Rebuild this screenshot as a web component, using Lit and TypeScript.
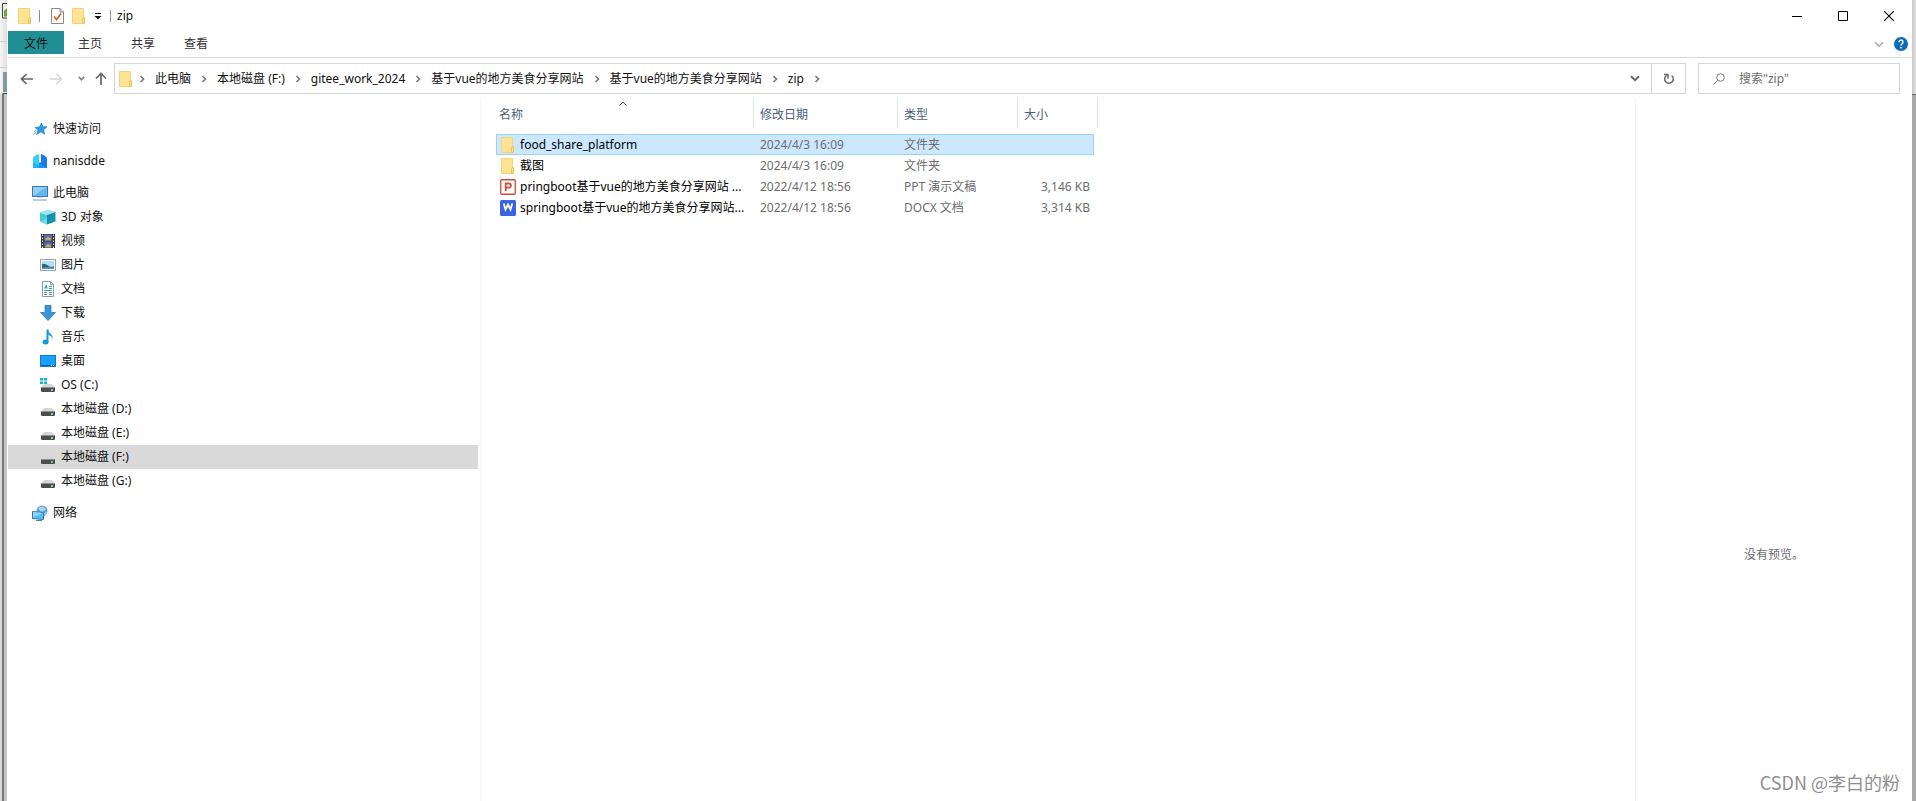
import { LitElement, html, css, svg } from "lit";
import { customElement, state } from "lit/decorators.js";
import { classMap } from "lit/directives/class-map.js";

const folderIcon = html`<svg width="14" height="16" viewBox="0 0 14 16" aria-hidden="true">
  <path d="M.5.5h11v15H.5z" fill="#ffe394" stroke="#f3d377" />
  <path d="M10.500 15.500v-5l1-1h1v6z" fill="#ffdf80" stroke="#ecc254" />
</svg>`;

const drive = svg`
  <path d="M4 7h8l3 4H1z" fill="#d4d6d7" />
  <rect x="1" y="10" width="14" height="5" rx="1" fill="#4b4f51" />
  <path d="M1.500 10.500h13" stroke="#8b8f91" />
  <circle cx="12" cy="13" r=".9" fill="#b9f0c8" />`;

const icons: Record<string, unknown> = {
  star: svg`<path d="M9.500 2l1.300 3.700 4.200.1-3.400 2.900 1 4.500-3.600-2.400-4.300 2.600 1.400-4.500L3 6.500l4.400-.6z" fill="#2f9be8" stroke="#1b7ac4" stroke-width=".7" /><path d="M2 10.500l2.500-1.500M1.500 13.500l3-2.500" stroke="#64b7ee" />`,
  cloud: svg`<path d="M1 4.500Q3 2 7 1v14H1z" fill="#35d0f6" /><path d="M1 9.500l6 3V15H1z" fill="#1aa6ee" opacity=".7" /><path d="M9 1q4 1 6 4v10H7V9.500h2z" fill="#1878e8" /><path d="M7 10l8 5H7z" fill="#1596f0" />`,
  pc: svg`<rect x=".5" y="1.500" width="15" height="10" fill="#5fb8ee" stroke="#3a7ca8" /><path d="M1 2h14L1 11z" fill="#8ed0f6" /><path d="M1 15h14" stroke="#7b9db4" /><path d="M5.500 12.500h5" stroke="#cfd8de" />`,
  cube: svg`<path d="M0 3.500L8 .5l7.500 2.500L7 6z" fill="#9be7f1" /><path d="M0 3.500L7 6v9.500l-7-3z" fill="#48c9da" /><path d="M7 6l8.500-3v9.500L7 15.500z" fill="#1390ab" /><path d="M7 9.500l-7 3 7 3z" fill="#7be0ea" opacity=".75" />`,
  video: svg`<rect x="1" y="1" width="14" height="14" fill="#35373a" /><rect x="4" y="1.500" width="8" height="6" fill="#566fb5" /><rect x="4" y="8.500" width="8" height="6" fill="#4b67ae" /><path d="M5 6.500l3-3 3 2v2H5zM5 13.500l3-3 3 2v2H5z" fill="#c9a84a" /><path d="M2.500 1.500v14M13.500 1.500v14" stroke="#e9e9e9" stroke-dasharray="1.500 1.500" />`,
  picture: svg`<rect x=".5" y="2.500" width="15" height="11" fill="#fff" stroke="#9aa3a9" /><rect x="2" y="4" width="12" height="8" fill="#b4def6" /><path d="M2 7q3-1 6 1.500t6 .5v3H2z" fill="#356277" /><path d="M2 10.500q6-1 12 0V12H2z" fill="#4d94bd" />`,
  document: svg`<path d="M2.500.5h8l3 3v12h-11z" fill="#fff" stroke="#8c9aa3" /><path d="M10.500.5v3h3" fill="none" stroke="#8c9aa3" /><path d="M9 5.500h3M9 7.500h3M4 9.500h8M4 11.500h3M4 13.500h3M9 11.500h3M9 13.500h3" stroke="#3f93c9" /><path d="M4 7.500l2.500-4.500 1 4.500z" fill="#3f93c9" />`,
  download: svg`<path d="M5 .5h6v7h4.500L8 15.500.5 7.500H5z" fill="#3b93d8" stroke="#2c79bb" stroke-width=".8" />`,
  music: svg`<path d="M8 1c.5 3 5.500 4.500 4.500 9-.5-2.500-2-3.500-4-4z" fill="#1596e0" /><path d="M7.500 .5v12.500" stroke="#1596e0" stroke-width="2" /><ellipse cx="5.500" cy="13" rx="3" ry="2.500" fill="#1596e0" />`,
  desktop: svg`<rect x=".5" y="2.500" width="15" height="11" fill="#16a0fa" stroke="#1079c8" /><path d="M1 12.500h14" stroke="#0c5f9f" /><path d="M11 12.500h1M13 12.500h1" stroke="#fff" />`,
  drive,
  system: svg`${drive}<path d="M0 1h3v2.500H0zM4 1h3v2.500H4zM0 4.500h3V7H0zM4 4.500h3V7H4z" fill="#12b4d4" />`,
  network: svg`<circle cx="10" cy="6" r="5.500" fill="#5ea4d4" /><path d="M6 3q5-3 8 1-3 4-6 2zM12 8l3-1-2 4z" fill="#a8d4ee" /><path d="M.5 6.500l11 1v7l-11-1z" fill="#54bdf4" stroke="#2c78a8" /><path d="M1 7l10 1-10 4z" fill="#8fd8fb" /><path d="M4 15.500h6" stroke="#5c7f94" />`,
};

const icon = (name: string) =>
  html`<svg width="16" height="16" viewBox="0 0 16 16" aria-hidden="true">${icons[name]}</svg>`;

const pptIcon = html`<svg width="16" height="16" viewBox="0 0 16 16" aria-hidden="true">
  <rect x=".75" y=".75" width="14.500" height="14.500" rx="1" fill="#fff" stroke="#cf4b38" stroke-width="1.300" />
  <path d="M5.700 12V4.500h3.100a2 2 0 0 1 0 4.200H5.700" fill="none" stroke="#cf4b38" stroke-width="1.800" />
</svg>`;

const docIcon = html`<svg width="16" height="16" viewBox="0 0 16 16" aria-hidden="true">
  <rect width="16" height="16" rx="1.500" fill="#3a63e4" />
  <path d="M3.700 3.500l1.800 6L8 4.500l2.500 5 1.800-6" fill="none" stroke="#fff" stroke-width="1.800" />
</svg>`;

const chevronRight = html`<svg width="6" height="8" viewBox="0 0 6 8" aria-hidden="true">
  <path d="M1.500 1l3 3-3 3" fill="none" stroke="#777" stroke-width="1.600" />
</svg>`;

const chevronDown = (w: number, color: string, weight = 1.6) => html`<svg width=${w} height="7" viewBox="0 0 10 7" aria-hidden="true">
  <path d="M1 1.200l4 4 4-4" fill="none" stroke=${color} stroke-width=${weight} />
</svg>`;

interface Place {
  label: string;
  icon: string;
  children?: Place[];
}

const places: Place[] = [
  { label: "快速访问", icon: "star" },
  { label: "nanisdde", icon: "cloud" },
  {
    label: "此电脑",
    icon: "pc",
    children: [
      { label: "3D 对象", icon: "cube" },
      { label: "视频", icon: "video" },
      { label: "图片", icon: "picture" },
      { label: "文档", icon: "document" },
      { label: "下载", icon: "download" },
      { label: "音乐", icon: "music" },
      { label: "桌面", icon: "desktop" },
      { label: "OS (C:)", icon: "system" },
      { label: "本地磁盘 (D:)", icon: "drive" },
      { label: "本地磁盘 (E:)", icon: "drive" },
      { label: "本地磁盘 (F:)", icon: "drive" },
      { label: "本地磁盘 (G:)", icon: "drive" },
    ],
  },
  { label: "网络", icon: "network" },
];

const crumbs = ["此电脑", "本地磁盘 (F:)", "gitee_work_2024", "基于vue的地方美食分享网站", "基于vue的地方美食分享网站", "zip"];

const files = [
  { name: "food_share_platform", date: "2024/4/3 16:09", type: "文件夹", size: "", icon: folderIcon },
  { name: "截图", date: "2024/4/3 16:09", type: "文件夹", size: "", icon: folderIcon },
  { name: "pringboot基于vue的地方美食分享网站 ...", date: "2022/4/12 18:56", type: "PPT 演示文稿", size: "3,146 KB", icon: pptIcon },
  { name: "springboot基于vue的地方美食分享网站...", date: "2022/4/12 18:56", type: "DOCX 文档", size: "3,314 KB", icon: docIcon },
];

const base = css`
  :host {
    display: block;
    box-sizing: border-box;
  }
  * {
    box-sizing: border-box;
  }
  svg {
    display: block;
    flex: none;
  }
  button {
    font: inherit;
    color: inherit;
    background: none;
    border: 0;
    margin: 0;
    padding: 0;
    display: flex;
    align-items: center;
    justify-content: center;
  }
  a {
    color: inherit;
    text-decoration: none;
  }
`;

@customElement("title-bar")
export class TitleBar extends LitElement {
  static styles = [
    base,
    css`
      .bar {
        display: flex;
        align-items: center;
        height: 31px;
        padding-left: 10px;
      }
      .quick {
        width: 14px;
        margin-right: 7px;
      }
      .line {
        width: 1px;
        height: 12px;
        background: #8c8c8c;
      }
      .tools {
        display: flex;
        align-items: center;
        gap: 8px;
        margin: 0 8px 0 11px;
      }
      .title {
        flex: 1;
        margin: 0 0 0 6px;
        font-size: 12px;
        font-weight: 400;
      }
      .control {
        width: 46px;
        height: 30px;
      }
    `,
  ];

  render() {
    return html`<header class="bar">
      <span class="quick">${folderIcon}</span>
      <span class="line"></span>
      <div class="tools">
        <button aria-label="属性">
          <svg width="13" height="16" viewBox="0 0 13 16">
            <path d="M.5.5h8.500l3.500 3.500v11.500H.5z" fill="#fff" stroke="#888" />
            <path d="M9 .5V4h3.500" fill="none" stroke="#888" />
            <path d="M3 8.500l2.500 3 4.500-6" fill="none" stroke="#d9652b" stroke-width="1.800" />
          </svg>
        </button>
        <button aria-label="新建文件夹">${folderIcon}</button>
        <button aria-label="自定义快速访问工具栏">
          <svg width="8" height="8" viewBox="0 0 8 8">
            <path d="M1 1.500h6" stroke="#111" />
            <path d="M.5 4h7L4 7.500z" fill="#111" />
          </svg>
        </button>
      </div>
      <span class="line"></span>
      <h1 class="title">zip</h1>
      <button class="control" aria-label="最小化">
        <svg width="10" height="10" viewBox="0 0 10 10"><path d="M0 5.500h10" stroke="#000" /></svg>
      </button>
      <button class="control" aria-label="最大化">
        <svg width="10" height="10" viewBox="0 0 10 10"><path d="M.5.5h9v9h-9z" fill="none" stroke="#000" /></svg>
      </button>
      <button class="control" aria-label="关闭">
        <svg width="10" height="10" viewBox="0 0 10 10"><path d="M0 0l10 10M10 0L0 10" stroke="#000" stroke-width="1.100" /></svg>
      </button>
    </header>`;
  }
}

@customElement("ribbon-tabs")
export class RibbonTabs extends LitElement {
  static styles = [
    base,
    css`
      .ribbon {
        display: flex;
        align-items: flex-start;
        height: 27px;
        border-bottom: 1px solid #d8dadb;
      }
      .tabs {
        display: flex;
        flex: 1;
      }
      .tab {
        height: 23px;
        padding: 2px 15px 0 14px;
        color: #333;
      }
      .file {
        padding: 2px 16px 0;
        background: #1f8f95;
        color: #111;
      }
      .side {
        display: flex;
        align-items: center;
        gap: 10px;
        height: 26px;
        padding-right: 4px;
      }
    `,
  ];

  render() {
    return html`<div class="ribbon">
      <nav class="tabs">
        <button class="tab file">文件</button>
        <button class="tab">主页</button>
        <button class="tab">共享</button>
        <button class="tab">查看</button>
      </nav>
      <div class="side">
        <button aria-label="展开功能区">${chevronDown(10, "#aaa")}</button>
        <button aria-label="帮助">
          <svg width="14" height="14" viewBox="0 0 14 14">
            <circle cx="7" cy="7" r="7" fill="#0a6cbd" />
            <path d="M5 5.200a2 2 0 1 1 3 1.600Q7 7.400 7 8.600" fill="none" stroke="#fff" stroke-width="1.400" />
            <circle cx="7" cy="10.700" r=".9" fill="#fff" />
          </svg>
        </button>
      </div>
    </div>`;
  }
}

@customElement("address-bar")
export class AddressBar extends LitElement {
  static styles = [
    base,
    css`
      .row {
        display: flex;
        padding: 5px 12px 4px 12px;
      }
      .history {
        display: flex;
        align-items: center;
        gap: 15px;
        width: 87px;
        margin-right: 7px;
      }
      .recent {
        display: flex;
        align-items: center;
        gap: 10px;
      }
      .address {
        display: flex;
        flex: 1;
        min-width: 0;
        height: 31px;
        border: 1px solid #d4d7d8;
        padding-left: 4px;
      }
      .crumbs {
        display: flex;
        align-items: center;
        flex: 1;
        min-width: 0;
        overflow: hidden;
        list-style: none;
        margin: 0;
        padding: 0;
        white-space: nowrap;
      }
      .crumb {
        display: flex;
        align-items: center;
      }
      .crumb svg {
        margin: 0 10px;
      }
      .folder {
        width: 10px;
        align-self: center;
      }
      .drop {
        width: 32px;
      }
      .refresh {
        width: 34px;
        border-left: 1px solid #d4d7d8;
      }
      .search {
        display: flex;
        align-items: center;
        gap: 14px;
        width: 202px;
        height: 31px;
        margin-left: 12px;
        padding-left: 14px;
        border: 1px solid #d4d7d8;
      }
      .box {
        flex: 1;
        min-width: 0;
        border: 0;
        padding: 0;
        outline: 0;
        font: inherit;
        background: none;
      }
      .box::placeholder {
        color: #6d6d6d;
        opacity: 1;
      }
    `,
  ];

  render() {
    return html`<div class="row">
      <div class="history">
        <button aria-label="后退">
          <svg width="14" height="12" viewBox="0 0 14 12"><path d="M13 6H2M6.500 1l-5 5 5 5" fill="none" stroke="#666" stroke-width="1.700" /></svg>
        </button>
        <button aria-label="前进">
          <svg width="14" height="12" viewBox="0 0 14 12"><path d="M1 6h11M7.500 1l5 5-5 5" fill="none" stroke="#d4d4d4" stroke-width="1.400" /></svg>
        </button>
        <div class="recent">
          <button aria-label="最近浏览的位置">${chevronDown(7, "#888", 2.4)}</button>
          <button aria-label="上移">
            <svg width="12" height="14" viewBox="0 0 12 14"><path d="M6 13V2M1 6.500l5-5 5 5" fill="none" stroke="#666" stroke-width="1.700" /></svg>
          </button>
        </div>
      </div>
      <div class="address">
        <span class="folder">${folderIcon}</span>
        <ol class="crumbs">
          <li class="crumb">${chevronRight}</li>
          ${crumbs.map((c) => html`<li class="crumb"><a href="#">${c}</a>${chevronRight}</li>`)}
        </ol>
        <button class="drop" aria-label="以前的位置">${chevronDown(10, "#666", 2)}</button>
        <button class="refresh" aria-label="刷新">
          <svg width="12" height="12" viewBox="0 0 12 12">
            <path d="M8.500 2.500a4.300 4.300 0 1 1-5 0" fill="none" stroke="#666" stroke-width="1.500" />
            <path d="M1 1.500h4v4" fill="none" stroke="#666" stroke-width="1.500" />
          </svg>
        </button>
      </div>
      <label class="search">
        <svg width="12" height="12" viewBox="0 0 12 12"><circle cx="7.500" cy="4.500" r="3.800" fill="none" stroke="#777" /><path d="M4.800 7.200L.5 11.500" stroke="#777" /></svg>
        <input class="box" type="search" aria-label="搜索" placeholder='搜索"zip"' />
      </label>
    </div>`;
  }
}

@customElement("place-tree")
export class PlaceTree extends LitElement {
  @state() private current = "本地磁盘 (F:)";

  static styles = [
    base,
    css`
      .tree,
      .branch {
        list-style: none;
        margin: 0;
        padding: 0;
      }
      .tree {
        display: flex;
        flex-direction: column;
        gap: 8px;
        padding-top: 19px;
      }
      .place {
        display: flex;
        align-items: center;
        gap: 5px;
        height: 24px;
        padding-left: 24px;
      }
      .branch .place {
        padding-left: 32px;
      }
      .current {
        background: #d9d9d9;
      }
    `,
  ];

  private link(p: Place) {
    return html`<a
      href="#"
      class=${classMap({ place: true, current: p.label === this.current })}
      @click=${() => (this.current = p.label)}
      >${icon(p.icon)}<span>${p.label}</span></a
    >`;
  }

  render() {
    return html`<ul class="tree">
      ${places.map(
        (p) => html`<li>
          ${this.link(p)}
          ${p.children ? html`<ul class="branch">${p.children.map((c) => html`<li>${this.link(c)}</li>`)}</ul>` : ""}
        </li>`,
      )}
    </ul>`;
  }
}

@customElement("file-list")
export class FileList extends LitElement {
  @state() private selected = 0;

  static styles = [
    base,
    css`
      .files {
        table-layout: fixed;
        width: 602px;
        border-collapse: separate;
        border-spacing: 0;
        white-space: nowrap;
      }
      .c-name { width: 258px; }
      .c-date { width: 144px; }
      .c-type { width: 120px; }
      .c-size { width: 76px; }
      .c-rest { width: 4px; }
      th {
        position: relative;
        padding: 0 0 6px;
        font-weight: 400;
      }
      th button {
        justify-content: flex-start;
        width: 100%;
        height: 30px;
        padding: 4px 0 0 6px;
        border-right: 1px solid #e4e6e8;
        color: #4c607a;
      }
      th:first-child button {
        padding-left: 3px;
      }
      .sort {
        position: absolute;
        top: 3px;
        left: calc(50% - 6px);
      }
      td {
        height: 21px;
        padding: 0 0 0 6px;
        color: #6d6d6d;
      }
      td.name {
        padding-left: 4px;
        color: #000;
      }
      .entry {
        display: flex;
        align-items: center;
        gap: 4px;
      }
      .glyph {
        display: flex;
        justify-content: center;
        width: 16px;
      }
      td.size {
        padding-right: 4px;
        text-align: right;
      }
      .selected td:not(.rest) {
        background: #cce8ff;
        border: solid #99d1ff;
        border-width: 1px 0;
      }
      .selected td.name {
        border-left-width: 1px;
        padding-left: 3px;
      }
      .selected td.size {
        border-right-width: 1px;
      }
      td.rest {
        padding: 0;
      }
    `,
  ];

  render() {
    return html`<table class="files">
      <colgroup>
        <col class="c-name" /><col class="c-date" /><col class="c-type" /><col class="c-size" /><col class="c-rest" />
      </colgroup>
      <thead>
        <tr>
          <th scope="col" aria-sort="ascending">
            <button>名称</button>
            <svg class="sort" width="8" height="5" viewBox="0 0 8 5"><path d="M.5 4.500L4 1l3.500 3.500" fill="none" stroke="#555" /></svg>
          </th>
          <th scope="col"><button>修改日期</button></th>
          <th scope="col"><button>类型</button></th>
          <th scope="col" colspan="2"><button>大小</button></th>
        </tr>
      </thead>
      <tbody>
        ${files.map(
          (f, i) => html`<tr class=${classMap({ selected: i === this.selected })} @click=${() => (this.selected = i)}>
            <td class="name"><span class="entry"><span class="glyph">${f.icon}</span>${f.name}</span></td>
            <td>${f.date}</td>
            <td>${f.type}</td>
            <td class="size">${f.size}</td>
            <td class="rest"></td>
          </tr>`,
        )}
      </tbody>
    </table>`;
  }
}

@customElement("app-root")
export class AppRoot extends LitElement {
  static styles = [
    base,
    css`
      :host {
        display: flex;
        position: relative;
        min-height: 100vh;
        background: #fff;
        color: #111;
        font: 12px/16px "Noto Sans", "Noto Sans CJK SC", sans-serif;
      }
      .edge {
        display: flex;
        flex-direction: column;
        flex: none;
        width: 7px;
        background: linear-gradient(to right, #f6f6f6, #dedede);
      }
      .edge.right {
        width: 4px;
        background: linear-gradient(to right, #c8c8c8, #e2e2e2);
      }
      .right .top {
        height: 95px;
        border-bottom: 1px solid #666;
      }
      .side {
        flex: 1;
        background: linear-gradient(to right, #d8d8d8 2px, #777 2px 4px, #c4c4c4 4px);
      }
      .right .side {
        background: #a9a9a9;
      }
      .window {
        display: flex;
        flex-direction: column;
        flex: 1;
        min-width: 0;
        padding-left: 1px;
      }
      .panes {
        display: flex;
        flex: 1;
      }
      .places {
        width: 470px;
      }
      .content {
        flex: 1;
        margin-left: 2px;
        padding-left: 15px;
        border-left: 1px solid #f5f5f5;
      }
      .preview {
        display: flex;
        align-items: center;
        justify-content: center;
        width: 277px;
        padding-top: 210px;
        border-left: 1px solid #f3f3f3;
        color: #6d6d6d;
      }
      .watermark {
        position: absolute;
        right: 16px;
        bottom: 6px;
        font-family: "Noto Sans CJK SC", sans-serif;
        font-size: 18px;
        line-height: 26px;
        color: #8f8f8f;
      }
    `,
  ];

  render() {
    return html`
      <div class="edge">
        <svg width="7" height="94" viewBox="0 0 7 94" aria-hidden="true">
          <path d="M7 3.500H2.500v14.500H7" fill="#e8efe4" stroke="#444" />
          <path d="M4 16.500V11l3-3v8.500z" fill="#6ba33c" />
          <path d="M0 41.500h7M0 67.500h7" stroke="#cfcfcf" />
          <path d="M3 72h4v20H3z" fill="#8797a4" />
          <path d="M7 93.500H2.500" stroke="#444" />
        </svg>
        <div class="side"></div>
      </div>
      <main class="window">
        <title-bar></title-bar>
        <ribbon-tabs></ribbon-tabs>
        <address-bar></address-bar>
        <div class="panes">
          <place-tree class="places"></place-tree>
          <section class="content"><file-list></file-list></section>
          <aside class="preview">没有预览。</aside>
        </div>
      </main>
      <div class="edge right"><div class="top"></div><div class="side"></div></div>
      <span class="watermark">CSDN @李白的粉</span>
    `;
  }
}
